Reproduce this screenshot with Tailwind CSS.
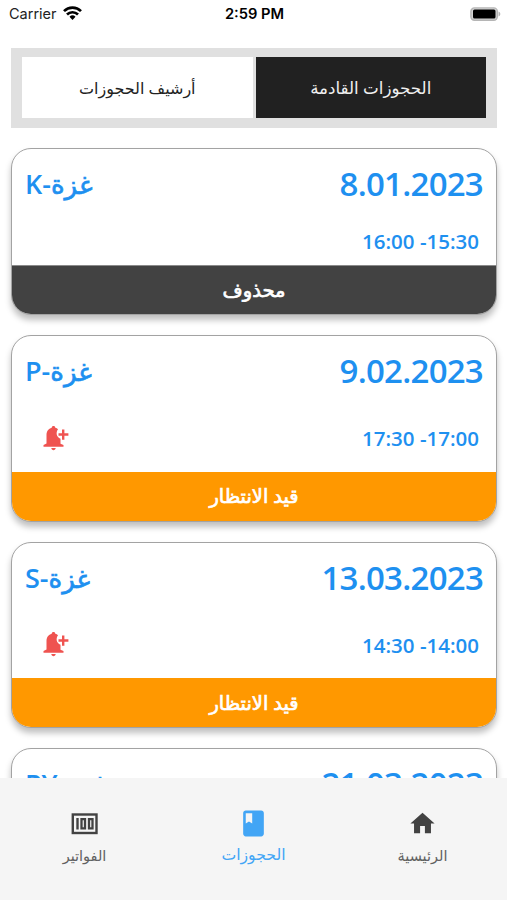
<!DOCTYPE html>
<html lang="ar" dir="rtl">
<head>
    <meta charset="UTF-8">
    <meta name="viewport" content="width=device-width, initial-scale=1.0">
    <title>الحجوزات</title>
    <script src="https://cdn.jsdelivr.net/npm/@tailwindcss/browser@4"></script>
</head>
<body class="bg-white h-[900px] w-[507px] overflow-hidden flex flex-col font-['Open_Sans','DejaVu_Sans',sans-serif]">
    <!-- Status bar -->
    <header dir="ltr" class="h-[28px] shrink-0 grid grid-cols-3 items-center pl-[9px] pr-[7px] font-['Inter',sans-serif] text-black">
        <div class="flex items-center gap-[6px]">
            <span class="text-[14.5px] leading-5 text-[#222]">Carrier</span>
            <svg class="w-[19px] h-[14px] -mt-[2px]" viewBox="0 0 19 14" fill="none" stroke="#000" stroke-width="2.7">
                <path d="M1 5.1a12.2 12.2 0 0 1 17 0"/>
                <path d="M4 8.5a7.8 7.8 0 0 1 11 0"/>
                <path d="M6.5 10.8a4.3 4.3 0 0 1 6 0L9.5 14z" fill="#000" stroke="none"/>
            </svg>
        </div>
        <span class="text-[14.7px] leading-5 font-semibold text-center whitespace-nowrap">2:59 PM</span>
        <svg class="w-[31px] h-[14px] justify-self-end -mt-[1px] -mr-[1px]" viewBox="0 0 31 14">
            <rect x=".9" y=".9" width="26.4" height="12.4" rx="3.5" fill="#d5d5d5" stroke="#b5b5b5" stroke-width="1.4"/>
            <rect x="3" y="2.5" width="22.5" height="9" rx="1.5" fill="#000"/>
            <path d="M28.5 4.5c2.4.8 2.4 4.2 0 5z" fill="#b5b5b5"/>
        </svg>
    </header>

    <main class="flex-1 min-h-0 overflow-hidden pl-[11px] pr-[10px] pt-[20px]">
        <!-- Tabs -->
        <div class="h-[80px] bg-[#e0e0e0] px-[11px] pt-[9px] pb-[10px] flex gap-[3px] text-[16px]">
            <button class="flex-1 bg-[#212121] text-[#f0f0f0] text-[16.7px] flex items-center justify-center"><span>الحجوزات القادمة</span></button>
            <button class="flex-1 bg-white text-[#222] flex items-center justify-center"><span>أرشيف الحجوزات</span></button>
        </div>

        <div class="mt-[20px] flex flex-col gap-[20px] text-[#1e90f0] font-semibold">
            <article class="h-[167px] shrink-0 rounded-[20px] border border-[#a3a3a3] overflow-hidden bg-white shadow-[0_5px_6px_rgba(0,0,0,0.25)] flex flex-col">
                <div class="flex justify-between items-center h-[69px] px-[13px]">
                    <span class="text-[33px] leading-none tracking-[-0.75px]">8.01.2023</span>
                    <span class="text-[27px] leading-none"><span class="font-normal text-[26px] [-webkit-text-stroke:0.7px]">غزة</span>-K</span>
                </div>
                <div class="flex-1 flex items-center px-[17px]">
                    <span dir="ltr" class="text-[20.5px] leading-none">16:00 -15:30</span>
                </div>
                <div class="h-[49px] border-t border-[#8a8a8a] bg-[#424242] text-white text-[19.5px] font-normal [-webkit-text-stroke:0.7px] flex items-center justify-center"><span>محذوف</span></div>
            </article>

            <article class="h-[186.5px] shrink-0 rounded-[20px] border border-[#a3a3a3] overflow-hidden bg-white shadow-[0_5px_6px_rgba(0,0,0,0.25)] flex flex-col">
                <div class="flex justify-between items-center h-[69px] px-[13px]">
                    <span class="text-[33px] leading-none tracking-[-0.75px]">9.02.2023</span>
                    <span class="text-[27px] leading-none"><span class="font-normal text-[26px] [-webkit-text-stroke:0.7px]">غزة</span>-P</span>
                </div>
                <div class="flex-1 flex items-center justify-between pr-[17px] pl-[30px]">
                    <span dir="ltr" class="text-[20.5px] leading-none">17:30 -17:00</span>
                    <svg class="w-[28px] h-[26px] -mt-[1px]" viewBox="0 0 28 26" fill="#ef5350">
                        <path d="M11.5 1c1 0 1.7.7 1.8 1.7 1.1.3 2 .8 2.7 1.5-2.5 3.3-1.5 8 2.5 9.5V18.8l3 1.2v1.8H1.5V20L4.5 18.5V10c0-3.8 2-6.5 5.2-7.3.1-1 .8-1.7 1.8-1.7zM9.3 23h4.4c-.2 1.3-1 2.2-2.2 2.2s-2-.9-2.2-2.2z"/>
                        <path d="M20 4.5h2.4v3.8h4v2.4h-4v4H20v-4h-3.500V8.3H20z"/>
                    </svg>
                </div>
                <div class="h-[49px] bg-[#ff9800] text-white text-[19.4px] font-normal [-webkit-text-stroke:0.7px] flex items-center justify-center"><span>قيد الانتظار</span></div>
            </article>

            <article class="h-[186.5px] shrink-0 rounded-[20px] border border-[#a3a3a3] overflow-hidden bg-white shadow-[0_5px_6px_rgba(0,0,0,0.25)] flex flex-col">
                <div class="flex justify-between items-center h-[69px] px-[13px]">
                    <span class="text-[33px] leading-none tracking-[-0.75px]">13.03.2023</span>
                    <span class="text-[27px] leading-none"><span class="font-normal text-[26px] [-webkit-text-stroke:0.7px]">غزة</span>-S</span>
                </div>
                <div class="flex-1 flex items-center justify-between pr-[17px] pl-[30px]">
                    <span dir="ltr" class="text-[20.5px] leading-none">14:30 -14:00</span>
                    <svg class="w-[28px] h-[26px] -mt-[1px]" viewBox="0 0 28 26" fill="#ef5350">
                        <path d="M11.5 1c1 0 1.7.7 1.8 1.7 1.1.3 2 .8 2.7 1.5-2.5 3.3-1.5 8 2.5 9.5V18.8l3 1.2v1.8H1.5V20L4.5 18.5V10c0-3.8 2-6.5 5.2-7.3.1-1 .8-1.7 1.8-1.7zM9.3 23h4.4c-.2 1.3-1 2.2-2.2 2.2s-2-.9-2.2-2.2z"/>
                        <path d="M20 4.5h2.4v3.8h4v2.4h-4v4H20v-4h-3.500V8.3H20z"/>
                    </svg>
                </div>
                <div class="h-[49px] bg-[#ff9800] text-white text-[19.4px] font-normal [-webkit-text-stroke:0.7px] flex items-center justify-center"><span>قيد الانتظار</span></div>
            </article>

            <article class="h-[186.5px] shrink-0 rounded-[20px] border border-[#a3a3a3] overflow-hidden bg-white shadow-[0_5px_6px_rgba(0,0,0,0.25)] flex flex-col">
                <div class="flex justify-between items-center h-[69px] px-[13px]">
                    <span class="text-[33px] leading-none tracking-[-0.75px]">21.03.2023</span>
                    <span class="text-[27px] leading-none"><span class="font-normal text-[26px] [-webkit-text-stroke:0.7px]">غزة</span>-PY</span>
                </div>
            </article>
        </div>
    </main>

    <!-- Bottom navigation -->
    <nav class="h-[122.5px] shrink-0 bg-[#f5f5f5] grid grid-cols-3 text-[#616161] text-[14.5px]">
        <a class="flex flex-col items-center pt-[31px]">
            <svg class="w-[29px] h-[29px]" viewBox="0 0 24 24" fill="#424242"><path d="M10 20v-6h4v6h5v-8h3L12 3 2 12h3v8z"/></svg>
            <span class="leading-6 mt-[6px]">الرئيسية</span>
        </a>
        <a class="flex flex-col items-center pt-[30px] text-[#42a5f5] text-[15.7px]">
            <svg class="w-[31px] h-[31px]" viewBox="0 0 24 24" fill="#42a5f5"><path d="M18 2H6c-1.1 0-2 .9-2 2v16c0 1.1.9 2 2 2h12c1.1 0 2-.9 2-2V4c0-1.1-.9-2-2-2zM6 4h5v8l-2.5-1.5L6 12V4z"/></svg>
            <span class="leading-6 mt-[3px]">الحجوزات</span>
        </a>
        <a class="flex flex-col items-center pt-[31px]">
            <svg class="w-[27px] h-[29px]" viewBox="0 0 27 29" fill="none" stroke="#424242">
                <rect x="1.8" y="5.5" width="23.7" height="18.5" stroke-width="2.4"/>
                <path d="M6.5 9v11.5" stroke-width="2.4"/>
                <path d="M10.5 10.2h3.5v9.2h-3.5zM18 10.2h3.5v9.2H18z" stroke-width="2.3"/>
            </svg>
            <span class="leading-6 mt-[6px]">الفواتير</span>
        </a>
    </nav>
</body>
</html>
